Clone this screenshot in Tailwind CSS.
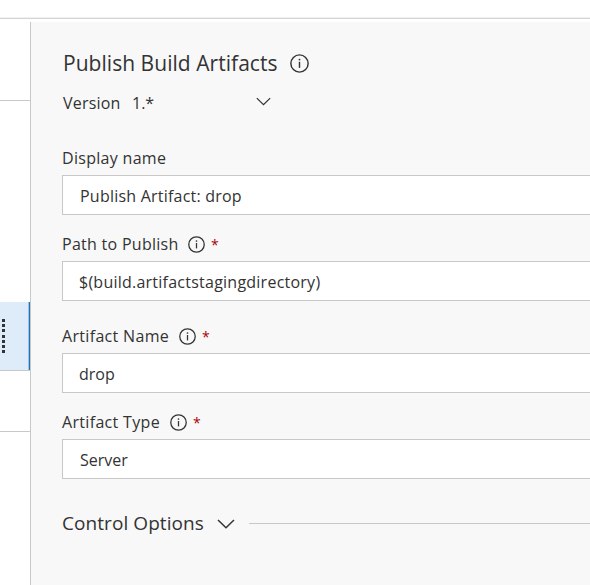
<!DOCTYPE html>
<html lang="en">
<head>
<meta charset="utf-8">
<title>Publish Build Artifacts</title>
<script src="https://cdn.jsdelivr.net/npm/@tailwindcss/browser@4"></script>
</head>
<body class="w-[590px] h-[585px] overflow-hidden bg-white text-[#333] text-[16px] font-['Open_Sans','Noto_Sans',sans-serif] whitespace-nowrap">
<svg class="hidden">
  <symbol id="info" viewBox="0 0 20 20"><circle cx="10" cy="10" r="9.1" fill="none" stroke="currentColor" stroke-width="1.5"/><path d="M10 8.2v6.4" stroke="currentColor" stroke-width="1.5"/><circle cx="10" cy="5.9" r="1" fill="currentColor"/></symbol>
  <symbol id="chevron" viewBox="0 0 18 10"><path d="M1 1l8 7.7L17 1" fill="none" stroke="currentColor" stroke-width="1.5"/></symbol>
</svg>
<header class="h-[22px] pt-[17px]"><div class="h-[2px] border-t border-b border-t-[#f1f1f1] border-b-[#d4d4d4]"></div></header>
<div class="flex h-[563px]">
  <aside class="w-[30px] shrink-0 flex flex-col">
    <div class="h-[79px] border-b border-[#c8c8c8]"></div>
    <div class="h-[201px]"></div>
    <div class="h-[69px] bg-[#deecf9] border-b border-b-[#c8c8c8] flex justify-between">
      <div class="pl-[2px] pt-[17px] flex flex-col gap-[2.2px]">
        <i class="block w-[3px] h-[3px] bg-[#333]"></i><i class="block w-[3px] h-[3px] bg-[#333]"></i><i class="block w-[3px] h-[3px] bg-[#333]"></i><i class="block w-[3px] h-[3px] bg-[#333]"></i><i class="block w-[3px] h-[3px] bg-[#333]"></i><i class="block w-[3px] h-[3px] bg-[#333]"></i><i class="block w-[3px] h-[3px] bg-[#333]"></i>
      </div>
      <div class="w-[2px] bg-[#1f72b8] border-l border-[#9cc3e4]"></div>
    </div>
    <div class="h-[61px] border-b border-[#c8c8c8]"></div>
  </aside>
  <main class="flex-1 min-w-0 bg-[#f8f8f8] border-l border-[#c8c8c8] pl-[31px] pt-[26px]">
    <div class="flex items-center h-[30px]">
      <h1 class="w-[228px] pt-px pl-px text-[21px] tracking-[0.04px]">Publish Build Artifacts</h1>
      <svg class="w-[19px] h-[19px]"><use href="#info"/></svg>
    </div>
    <div class="flex items-center h-[24px] mt-[13px]">
      <span class="w-[70px] pl-px tracking-[0.2px]">Version</span><span class="w-[124px]">1.*</span>
      <svg class="w-[15px] h-[9px] mb-[3px]"><use href="#chevron"/></svg>
    </div>
    <div class="flex items-center h-[24px] mt-[31px] tracking-[0.3px]">Display name</div>
    <div class="h-[40px] mt-[5px] bg-white border border-r-0 border-[#c8c8c8] pl-[17px] pt-[2px] flex items-center tracking-[0.22px]">Publish Artifact: drop</div>
    <div class="flex items-center h-[24px] mt-[17px]">
      <span class="w-[126px] tracking-[0.28px]">Path to Publish</span><svg class="w-[17px] h-[17px]"><use href="#info"/></svg><span class="ml-[6px] text-[14px] text-[#a80000]">*</span>
    </div>
    <div class="h-[40px] mt-[5px] bg-white border border-r-0 border-[#c8c8c8] pl-[16px] pt-[2px] flex items-center tracking-[0.24px]">$(build.artifactstagingdirectory)</div>
    <div class="flex items-center h-[24px] mt-[23px]">
      <span class="w-[117px] tracking-[0.32px]">Artifact Name</span><svg class="w-[17px] h-[17px]"><use href="#info"/></svg><span class="ml-[6px] text-[14px] text-[#a80000]">*</span>
    </div>
    <div class="h-[40px] mt-[5px] bg-white border border-r-0 border-[#c8c8c8] pl-[16px] pt-[2px] flex items-center">drop</div>
    <div class="flex items-center h-[24px] mt-[17px]">
      <span class="w-[108px] tracking-[0.32px]">Artifact Type</span><svg class="w-[17px] h-[17px]"><use href="#info"/></svg><span class="ml-[6px] text-[14px] text-[#a80000]">*</span>
    </div>
    <div class="h-[40px] mt-[5px] bg-white border border-r-0 border-[#c8c8c8] pl-[17px] pt-[2px] flex items-center">Server</div>
    <div class="flex items-center h-[30px] mt-[29px]">
      <h2 class="w-[155px] text-[19px] tracking-[0.07px]">Control Options</h2>
      <svg class="w-[18px] h-[10px] mt-[2px]"><use href="#chevron"/></svg>
      <div class="flex-1 ml-[14px] h-px bg-[#c8c8c8]"></div>
    </div>
  </main>
</div>
</body>
</html>
